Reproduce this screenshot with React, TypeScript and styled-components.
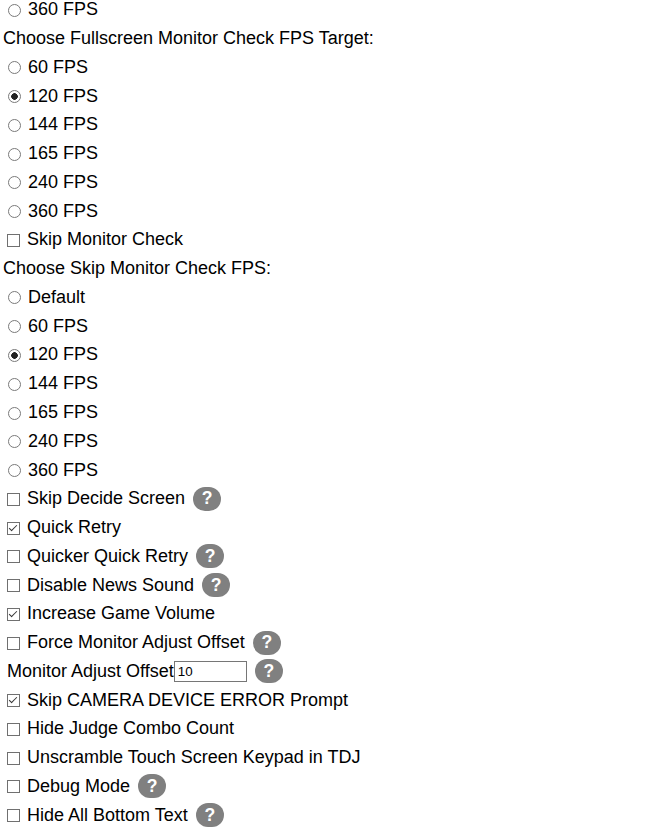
import React from "react";
import styled, { createGlobalStyle } from "styled-components";

const GlobalStyle = createGlobalStyle`
  html, body {
    margin: 0;
    padding: 0;
    background: #fff;
    overflow: hidden;
  }
`;

const Page = styled.div`
  height: 830px;
  overflow: hidden;
  font-family: "Liberation Sans", Arial, sans-serif;
  font-size: 18px;
  color: #000;
`;

const Scroller = styled.div`
  margin-top: -4.6px;
`;

const Row = styled.label`
  display: flex;
  align-items: center;
  height: 28.77px;
  padding-left: 8px;
  white-space: nowrap;
`;

const Heading = styled.div`
  display: flex;
  align-items: center;
  height: 28.77px;
  padding-left: 3px;
`;

const Radio = styled.input.attrs({ type: "radio" })`
  appearance: none;
  box-sizing: border-box;
  width: 13px;
  height: 13px;
  margin: 1px 7px 0 0;
  flex: none;
  border: 1px solid #7a7a7a;
  border-radius: 50%;
  background: #fff;

  &:checked {
    background: radial-gradient(circle, #222 0 3px, #fff 3.6px);
  }
`;

const Check = styled.input.attrs({ type: "checkbox" })`
  appearance: none;
  position: relative;
  box-sizing: border-box;
  width: 13px;
  height: 13px;
  margin: 1px 7px 0 -1px;
  flex: none;
  border: 1px solid #707070;
  background: #fff;

  &:checked::after {
    content: "";
    position: absolute;
    left: 3px;
    top: 0;
    width: 4px;
    height: 8px;
    box-sizing: border-box;
    border: solid #333;
    border-width: 0 1.5px 1.5px 0;
    transform: rotate(45deg);
  }
`;

const Help = styled.span`
  display: inline-flex;
  align-items: center;
  justify-content: center;
  width: 28px;
  height: 24px;
  margin-left: 8px;
  border-radius: 12px;
  background: #808080;
  color: #fff;
  font-weight: bold;
  font-size: 17.6px;
`;

const OffsetRow = styled.div`
  display: flex;
  align-items: center;
  height: 28.77px;
  padding-left: 7px;
`;

const OffsetInput = styled.input`
  box-sizing: border-box;
  width: 73px;
  height: 21px;
  padding: 1px 3px;
  border: 1px solid #767676;
  font-family: "Liberation Sans", Arial, sans-serif;
  font-size: 13.33px;
`;

const fps = ["60 FPS", "120 FPS", "144 FPS", "165 FPS", "240 FPS", "360 FPS"];

function RadioGroup({ name, options, selected }: { name: string; options: string[]; selected: string }) {
  return (
    <>
      {options.map((o) => (
        <Row key={o}>
          <Radio name={name} defaultChecked={o === selected} />
          {o}
        </Row>
      ))}
    </>
  );
}

function CheckRow({ label, checked, help }: { label: string; checked?: boolean; help?: boolean }) {
  return (
    <Row>
      <Check defaultChecked={checked} />
      {label}
      {help && <Help>?</Help>}
    </Row>
  );
}

export default function App() {
  return (
    <Page>
      <GlobalStyle />
      <Scroller>
        <Row>
          <Radio name="prev" />
          360 FPS
        </Row>
        <Heading>Choose Fullscreen Monitor Check FPS Target:</Heading>
        <RadioGroup name="full" options={fps} selected="120 FPS" />
        <CheckRow label="Skip Monitor Check" />
        <Heading>Choose Skip Monitor Check FPS:</Heading>
        <RadioGroup name="skip" options={["Default", ...fps]} selected="120 FPS" />
        <CheckRow label="Skip Decide Screen" help />
        <CheckRow label="Quick Retry" checked />
        <CheckRow label="Quicker Quick Retry" help />
        <CheckRow label="Disable News Sound" help />
        <CheckRow label="Increase Game Volume" checked />
        <CheckRow label="Force Monitor Adjust Offset" help />
        <OffsetRow>
          Monitor Adjust Offset
          <OffsetInput defaultValue="10" />
          <Help>?</Help>
        </OffsetRow>
        <CheckRow label="Skip CAMERA DEVICE ERROR Prompt" checked />
        <CheckRow label="Hide Judge Combo Count" />
        <CheckRow label="Unscramble Touch Screen Keypad in TDJ" />
        <CheckRow label="Debug Mode" help />
        <CheckRow label="Hide All Bottom Text" help />
      </Scroller>
    </Page>
  );
}
